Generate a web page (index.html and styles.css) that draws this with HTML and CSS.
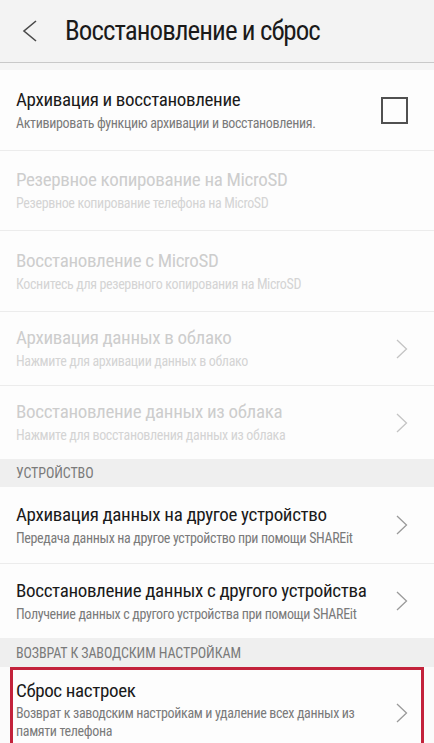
FILE: index.html
```html
<!DOCTYPE html>
<html lang="ru">
<head>
<meta charset="utf-8">
<link rel="stylesheet" href="styles.css">
</head>
<body>
<div class="screen">
  <header class="appbar">
    <svg class="back" width="16" height="22" viewBox="0 0 16 22"><path d="M14 1 L2 11 L14 21" fill="none" stroke="#4a4a4a" stroke-width="1.6"/></svg>
    <h1 class="appbar-title">Восстановление и сброс</h1>
  </header>
  <div class="strip"></div>

  <div class="row h80">
    <div class="text">
      <div class="title">Архивация и восстановление</div>
      <div class="sub">Активировать функцию архивации и восстановления.</div>
    </div>
    <span class="checkbox"></span>
  </div>
  <div class="row h79 disabled">
    <div class="text">
      <div class="title">Резервное копирование на MicroSD</div>
      <div class="sub">Резервное копирование телефона на MicroSD</div>
    </div>
  </div>
  <div class="row h80 disabled">
    <div class="text">
      <div class="title">Восстановление с MicroSD</div>
      <div class="sub">Коснитесь для резервного копирования на MicroSD</div>
    </div>
  </div>
  <div class="row h73 disabled">
    <div class="text">
      <div class="title">Архивация данных в облако</div>
      <div class="sub">Нажмите для архивации данных в облако</div>
    </div>
    <svg class="chev" width="12" height="20" viewBox="0 0 12 20"><path d="M1 1 L10.5 10 L1 19" fill="none" stroke="#c4c4c4" stroke-width="1.3"/></svg>
  </div>
  <div class="row h73 disabled last">
    <div class="text">
      <div class="title">Восстановление данных из облака</div>
      <div class="sub">Нажмите для восстановления данных из облака</div>
    </div>
    <svg class="chev" width="12" height="20" viewBox="0 0 12 20"><path d="M1 1 L10.5 10 L1 19" fill="none" stroke="#c4c4c4" stroke-width="1.3"/></svg>
  </div>

  <div class="section s28">УСТРОЙСТВО</div>

  <div class="row h76">
    <div class="text">
      <div class="title">Архивация данных на другое устройство</div>
      <div class="sub">Передача данных на другое устройство при помощи SHAREit</div>
    </div>
    <svg class="chev" width="12" height="20" viewBox="0 0 12 20"><path d="M1 1 L10.5 10 L1 19" fill="none" stroke="#9a9a9a" stroke-width="1.3"/></svg>
  </div>
  <div class="row h74 last">
    <div class="text">
      <div class="title">Восстановление данных с другого устройства</div>
      <div class="sub">Получение данных с другого устройства при помощи SHAREit</div>
    </div>
    <svg class="chev" width="12" height="20" viewBox="0 0 12 20"><path d="M1 1 L10.5 10 L1 19" fill="none" stroke="#9a9a9a" stroke-width="1.3"/></svg>
  </div>

  <div class="section s29">ВОЗВРАТ К ЗАВОДСКИМ НАСТРОЙКАМ</div>

  <div class="highlight">
    <div class="row hl">
      <div class="text">
        <div class="title">Сброс настроек</div>
        <div class="sub">Возврат к заводским настройкам и удаление всех данных из памяти телефона</div>
      </div>
      <svg class="chev" width="12" height="20" viewBox="0 0 12 20"><path d="M1 1 L10.5 10 L1 19" fill="none" stroke="#9a9a9a" stroke-width="1.3"/></svg>
    </div>
  </div>
</div>
</body>
</html>
```

FILE: styles.css
```css
html, body {
  margin: 0;
  padding: 0;
  background: #fbfbfb;
}
body {
  font-family: "Roboto Condensed", Roboto, "Liberation Sans", sans-serif;
  font-stretch: condensed;
  color: #1c1c1c;
  width: 434px;
  height: 743px;
  overflow: hidden;
}
.screen {
  display: flex;
  flex-direction: column;
}
.appbar {
  height: 62px;
  background: #f3f3f3;
  border-bottom: 1px solid #c9c9c9;
  display: flex;
  align-items: center;
  padding-left: 22px;
  box-sizing: content-box;
}
.back {
  margin-right: 27px;
  flex: none;
}
.appbar-title {
  margin: 0;
  font-weight: 400;
  font-size: 27px;
  letter-spacing: -0.95px;
  color: #1a1a1a;
}
.strip {
  height: 7px;
  background: #f5f5f5;
}
.row {
  display: flex;
  align-items: center;
  padding: 0 26px 0 16px;
  border-bottom: 1px solid #ececec;
  background: #fdfdfd;
}
.row.last { border-bottom: none; }
.h80 { height: 80px; }
.h79 { height: 79px; }
.h76 { height: 76px; }
.h74 { height: 74px; }
.h73 { height: 73px; }
.text {
  flex: 1;
  min-width: 0;
}
.title {
  font-size: 19px;
  line-height: 23px;
  letter-spacing: -0.35px;
  color: #1a1a1a;
}
.sub {
  font-size: 14px;
  line-height: 19px;
  letter-spacing: -0.35px;
  color: #7a7a7a;
  margin-top: 3px;
}
.disabled .title { color: #cdcdcd; }
.disabled .sub { color: #d4d4d4; }
.checkbox {
  width: 23px;
  height: 23px;
  border: 2px solid #505050;
  flex: none;
}
.chev {
  flex: none;
}
.section {
  background: #efefef;
  padding-left: 16px;
  font-size: 14px;
  letter-spacing: -0.1px;
  color: #7a7a7a;
  display: flex;
  align-items: center;
}
.s28 { height: 28px; }
.s29 { height: 29px; }
.highlight {
  margin: 0 10px;
  border: 3px solid #c3223b;
}
.row.hl {
  border-bottom: none;
  padding: 0 13px 0 3px;
  height: 72px;
  align-items: flex-start;
  padding-top: 9px;
}
.hl .chev { margin-top: 24px; }
.hl .sub { line-height: 18px; margin-top: 2px; }
```
